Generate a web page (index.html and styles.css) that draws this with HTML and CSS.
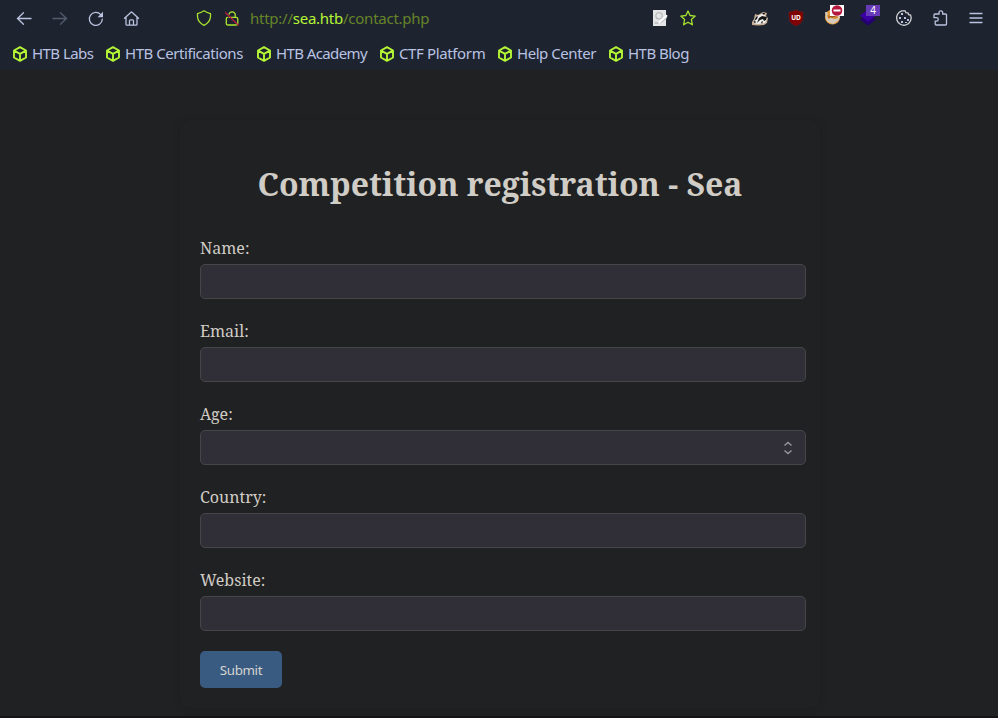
FILE: index.html
```html
<!DOCTYPE html>
<html lang="en">
<head>
<meta charset="utf-8">
<title>Competition registration - Sea</title>
<link rel="stylesheet" href="styles.css">
</head>
<body>
<svg class="defs" width="0" height="0"><symbol id="cube" viewBox="0 0 16 16"><path d="M8 1.1 14 4.5v7L8 14.9 2 11.5v-7zM2.5 4.8 8 7.9l5.5-3.1M8 7.9v6.5" fill="none" stroke="#b5f535" stroke-width="1.9" stroke-linejoin="round"/></symbol></svg>
<header class="browser">
  <div class="toolbar">
    <nav class="group nav">
      <svg class="icon" viewBox="0 0 16 16"><path d="M15 8.5H1.5M7.5 2.8 1.5 8.5l6 5.7"/></svg>
      <svg class="icon dim" viewBox="0 0 16 16"><path d="M1 8.5h13.5M8.5 2.8l6 5.7-6 5.7"/></svg>
      <svg class="icon" viewBox="0 0 16 16"><path d="M14.3 9.2A6.5 6.5 0 1 1 12.7 4.6"/><path class="solid" d="M15 1.8v5.4H9.6z"/></svg>
      <svg class="icon home" viewBox="0 0 16 16"><path d="M.5 8.3 7 2.2q.5-.4 1 0l6.5 6.1M2 7.2v7.1q0 .9.9.9h9.2q.9 0 .9-.9V7.2M5.5 15v-4.2q0-1 1-1h2q1 0 1 1V15"/></svg>
    </nav>
    <div class="address">
      <svg class="icon green" viewBox="0 0 16 16"><path d="M8 .8q3.2 2 6.5 2.8v3.2q-.5 5.7-6.5 8.6-6-2.9-6.5-8.6V3.6Q4.800 2.800 8 .8z" stroke-linejoin="round"/></svg>
      <svg class="icon lock" viewBox="0 0 16 16"><path class="lime" d="M5 4.2a3.2 3.2 0 0 1 6.2 0v3.2M5.5 7.400h6.800q1.500 0 1.500 1.500v4.600q0 1.500-1.500 1.500H3.900q-1.600 0-1.600-1.500V8.900q0-1.500 1.400-1.500"/><path class="slash" d="M1.300 2.500 14.600 15.400"/></svg>
      <span class="url">http://<b>sea.htb</b>/contact.php</span>
      <svg class="icon" viewBox="0 0 16 16"><path d="M1 0h13v16H1z" class="paper"/><circle cx="7" cy="5.8" r="3.2" class="ring"/><path d="M3 13h3M9 12.2l5.5-4.4" class="ring"/><path d="m7.5 12 7-6.2" class="white"/></svg>
      <svg class="icon green" viewBox="0 0 16 16"><path d="m8 1 2.1 4.5 5.1.6-3.8 3.4 1 5.3L8 12.2l-4.4 2.6 1-5.3L.8 6.1l5.1-.6z" stroke-linejoin="round"/></svg>
    </div>
    <div class="group extensions">
      <svg class="icon" viewBox="0 0 16 16"><path d="m0 12 2-3 1-5 3 1 5-3 4 1-1 3 2 2-1 5-3 2-6 .5-6-.5z" class="fur"/><path d="m3 8 2-2 5-2 3 1 2 4-2 4-7 1-5-1z" class="whitefill"/><path d="m4 7 2-1-1 3-3 2zM7 8l3-2 5 1-1 3-2 1-1-2-3 1-3 3z" class="black"/><path d="m10 3 3 0-1 2zM1 12l2-1 1 1-1 1zM9 12l2-1-1 3z" class="black"/></svg>
      <svg class="icon" viewBox="0 0 16 16"><path class="ublock" d="M8 0q4 2 7 2v6q0 5-7 8-7-3-7-8V2q3 0 7-2z"/><text x="8" y="9.8" class="ubtext">UD</text></svg>
      <svg class="icon wide" viewBox="0 0 20 24"><circle cx="8.5" cy="17" r="7.6" fill="#e79b3e"/><path d="m1 12h2l1 3 8 0 3-1 1 3-2 4-5 3-5-2-2-3z" fill="#d4cbbd"/><path d="m3 15 4-1 6 1 1 3-3 1-4-1-3 1z" fill="#d98b30"/><path d="m5 17 2-1 1 1 3-1" fill="none" stroke="#8f5420"/><path d="M6 5h14v11H6z" fill="#fff"/><circle cx="13" cy="10.500" r="5.300" fill="#b6183d"/><path d="M9.500 9.500h7v2h-7z" fill="#fff"/></svg>
      <svg class="icon wide" viewBox="0 0 20 24"><path d="m0 19.500 8-6 8 6-8 6z" fill="#240070"/><path d="m0 15.500 8-6 8 6-8 6z" fill="#3c00a5"/><path d="M6 5h14v11H6z" fill="#673ab7"/><text x="13" y="14" class="badge">4</text></svg>
      <svg class="icon cookie" viewBox="0 0 16 16"><path d="M5.800.9a7.300 7.300 0 1 0 8.800 4.200l-2-.5-.7-1.800-2-.1-.8-1.900z"/><path class="solid" d="M5 3h2v2H5zM3 7h2v2H3zM8 7h2v2H8zM11 9h2v2h-2zM5 11h2v2H5zM9 12h2v1H9z"/></svg>
      <svg class="icon puzzle" viewBox="0 0 16 16"><path d="M6 4V2.7a1.8 1.8 0 0 1 3.7 0V4h2.8q1 0 1 1v9q0 1-1 1H3.2q-1 0-1-1v-2.8h1.3a1.8 1.8 0 0 0 0-3.6H1V5q0-1 1-1z"/></svg>
      <svg class="icon menu" viewBox="0 0 16 16"><path d="M2 3.5h12M2 8h12M2 12.5h12"/></svg>
    </div>
  </div>
  <nav class="bookmarks">
    <a class="labs"><svg><use href="#cube"/></svg><span>HTB Labs</span></a>
    <a class="certs"><svg><use href="#cube"/></svg><span>HTB Certifications</span></a>
    <a class="academy"><svg><use href="#cube"/></svg><span>HTB Academy</span></a>
    <a class="ctf"><svg><use href="#cube"/></svg><span>CTF Platform</span></a>
    <a class="help"><svg><use href="#cube"/></svg><span>Help Center</span></a>
    <a class="blog"><svg><use href="#cube"/></svg><span>HTB Blog</span></a>
  </nav>
</header>
<main class="page">
  <form class="registration">
    <h1>Competition registration - Sea</h1>
    <label>Name:<input type="text"></label>
    <label>Email:<input type="text"></label>
    <label>Age:<span class="number"><svg viewBox="0 0 10 14"><path d="m1.5 4.5 3.5-3 3.5 3M1.5 9.5l3.5 3 3.5-3"/></svg></span></label>
    <label>Country:<input type="text"></label>
    <label>Website:<input type="text"></label>
    <button type="button">Submit</button>
  </form>
</main>
</body>
</html>
```
FILE: styles.css
```css
* { box-sizing: border-box; }
body {
  margin: 0;
  height: 718px;
  overflow: hidden;
  display: flex;
  flex-direction: column;
  background: #202122;
  font-family: "Noto Sans", sans-serif;
}
.defs { position: absolute; }
.browser { height: 70px; flex: none; background: #1e242f; }
.toolbar { display: flex; height: 36px; align-items: center; padding-left: 16px; }
.group { display: flex; gap: 20px; align-items: center; }
.icon {
  width: 16px;
  height: 16px;
  flex: none;
  fill: none;
  stroke: #b9c2df;
  stroke-width: 1.3;
  stroke-linecap: round;
  overflow: visible;
}
.dim { stroke: #535c6f; }
.green, .lime { stroke: #a9e52f; }
.solid { fill: #b9c2df; stroke: none; }
.slash { stroke: #c51c45; stroke-linecap: butt; }
.address { display: flex; align-items: center; width: 500px; margin-left: 56px; }
.lock { margin-left: 12px; }
.url { width: 402px; margin-left: 10px; font-size: 15px; line-height: 20px; letter-spacing: -.25px; color: #658329; white-space: nowrap; }
.url b { font-weight: 400; color: #b5f535; }
.address .icon:last-child { margin-left: 12px; }
.extensions { margin-left: 56px; }
.paper { fill: #e3e5e7; stroke: none; }
.ring { stroke: #b9bbbc; }
.white { stroke: #fff; stroke-width: 2; }
.fur { fill: #c8ad93; stroke: none; }
.black { fill: #151515; stroke: none; }
.whitefill { fill: #eee; stroke: none; }
.ublock { fill: #800000; stroke: #5f2028; stroke-width: .5; }
.ubtext { font: 700 6.5px "Noto Sans", sans-serif; fill: #fff; stroke: none; text-anchor: middle; }
.wide { width: 20px; height: 24px; margin: -8px -4px 4px 0; stroke: none; }
.badge { font: 10px "Noto Sans", sans-serif; fill: #fff; text-anchor: middle; }
.cookie { stroke: #d0d1d5; }
.puzzle { margin: 0 -1px 0 1px; }
.bookmarks { display: flex; height: 34px; align-items: center; padding: 2px 0 0 12px; color: #b9c2e3; font-size: 15px; line-height: 20px; letter-spacing: -.45px; }
.bookmarks a { display: flex; align-items: center; gap: 4px; white-space: nowrap; }
.bookmarks span { margin-top: -2px; }
.bookmarks svg { width: 16px; height: 16px; flex: none; }
.bookmarks .labs { width: 93px; letter-spacing: -.55px; }
.certs { width: 151px; }
.bookmarks .academy { width: 123px; letter-spacing: -.6px; }
.bookmarks .ctf { width: 118px; letter-spacing: -.37px; }
.help { width: 111px; }
.bookmarks .blog { letter-spacing: -.52px; }
.page { flex: 1; padding-top: 50px; border-bottom: 2px solid #171216; }
.registration {
  width: 640px;
  height: 588px;
  margin: 0 auto 0 180px;
  padding: 20px;
  border-radius: 10px;
  background: #202122;
  box-shadow: 0 0 10px rgba(0, 0, 0, .1);
  color: #d0ccc6;
  font-family: "Noto Serif", "DejaVu Serif Condensed", "DejaVu Serif", serif;
}
h1 { margin: 22px 0 31px; font-size: 32px; line-height: 44px; text-align: center; white-space: nowrap; }
label { display: block; width: 606px; margin-bottom: 21px; font-size: 16px; line-height: 22px; }
label input, .number {
  display: block;
  width: 606px;
  height: 35px;
  margin: 5px 0 0;
  border: 1px solid #464649;
  border-radius: 5px;
  outline: 0;
  background: #302e37;
}
.number { display: flex; align-items: center; justify-content: flex-end; padding-right: 12px; }
.number svg { width: 10px; height: 14px; fill: none; stroke: #96949b; stroke-width: 1.5; }
button { display: block; width: 82px; height: 37px; margin-top: -1px; padding: 0; border: 0; border-radius: 5px; background: #395b82; color: #d5d3ce; font: 13.333px "Noto Sans", sans-serif; letter-spacing: -.35px; }
```
